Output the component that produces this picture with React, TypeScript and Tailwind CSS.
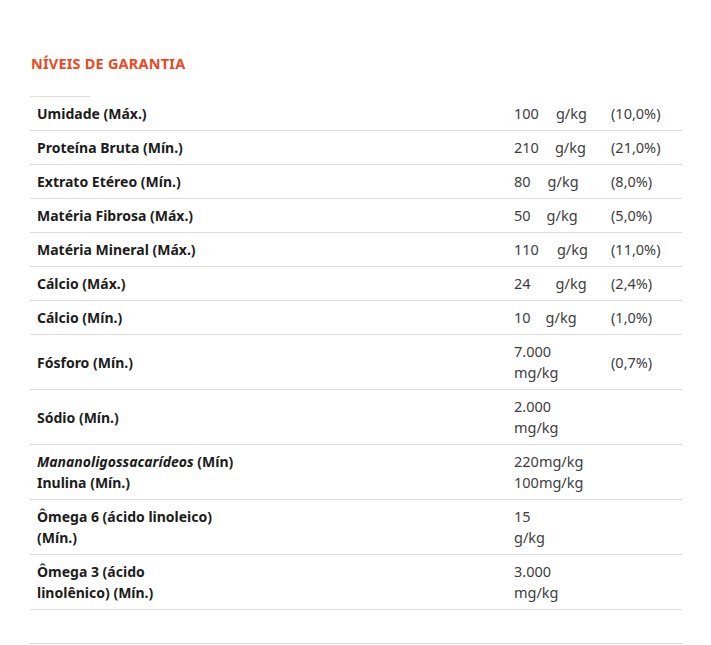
const rows: { label: React.ReactNode; value: React.ReactNode; pct?: string }[] = [
  { label: "Umidade (Máx.)", value: <>100<span className="ml-[17px]">g/kg</span></>, pct: "(10,0%)" },
  { label: "Proteína Bruta (Mín.)", value: <>210<span className="ml-[16px]">g/kg</span></>, pct: "(21,0%)" },
  { label: "Extrato Etéreo (Mín.)", value: <>80<span className="ml-[17px]">g/kg</span></>, pct: "(8,0%)" },
  { label: "Matéria Fibrosa (Máx.)", value: <>50<span className="ml-[16px]">g/kg</span></>, pct: "(5,0%)" },
  { label: "Matéria Mineral (Máx.)", value: <>110<span className="ml-[18px]">g/kg</span></>, pct: "(11,0%)" },
  { label: "Cálcio (Máx.)", value: <>24<span className="ml-[25px]">g/kg</span></>, pct: "(2,4%)" },
  { label: "Cálcio (Mín.)", value: <>10<span className="ml-[15px]">g/kg</span></>, pct: "(1,0%)" },
  { label: "Fósforo (Mín.)", value: <>7.000<br />mg/kg</>, pct: "(0,7%)" },
  { label: "Sódio (Mín.)", value: <>2.000<br />mg/kg</> },
  {
    label: <><i>Mananoligossacarídeos</i> (Mín)<br />Inulina (Mín.)</>,
    value: <>220mg/kg<br />100mg/kg</>,
  },
  { label: <>Ômega 6 (ácido linoleico)<br />(Mín.)</>, value: <>15<br />g/kg</> },
  { label: <>Ômega 3 (ácido<br />linolênico) (Mín.)</>, value: <>3.000<br />mg/kg</> },
]

export default function App() {
  return (
    <div className="min-h-[645px] bg-white pl-[30px] pt-[53px] font-['Noto_Sans',sans-serif]">
      <h2 className="text-[14.5px] font-bold tracking-[0.2px] leading-5 text-[#f1471d] pl-px">
        NÍVEIS DE GARANTIA
      </h2>
      <div className="mt-[23px] h-px w-[60px] bg-[#dcdcdc]" />
      <div className="w-[652px]">
        {rows.map((r, i) => (
          <div
            key={i}
            className="flex items-center border-b border-[#dcdcdc] py-1.5 leading-[21px]"
          >
            <div className="w-[484px] pl-[7px] text-[14px] font-bold text-[#1c1c1c]">{r.label}</div>
            <div className="w-[97px] text-[14.5px] text-[#3d3d3d]">{r.value}</div>
            <div className="flex-1 text-[14.5px] text-[#3d3d3d]">{r.pct}</div>
          </div>
        ))}
        <div className="h-[34px] border-b border-[#dcdcdc]" />
      </div>
    </div>
  )
}
